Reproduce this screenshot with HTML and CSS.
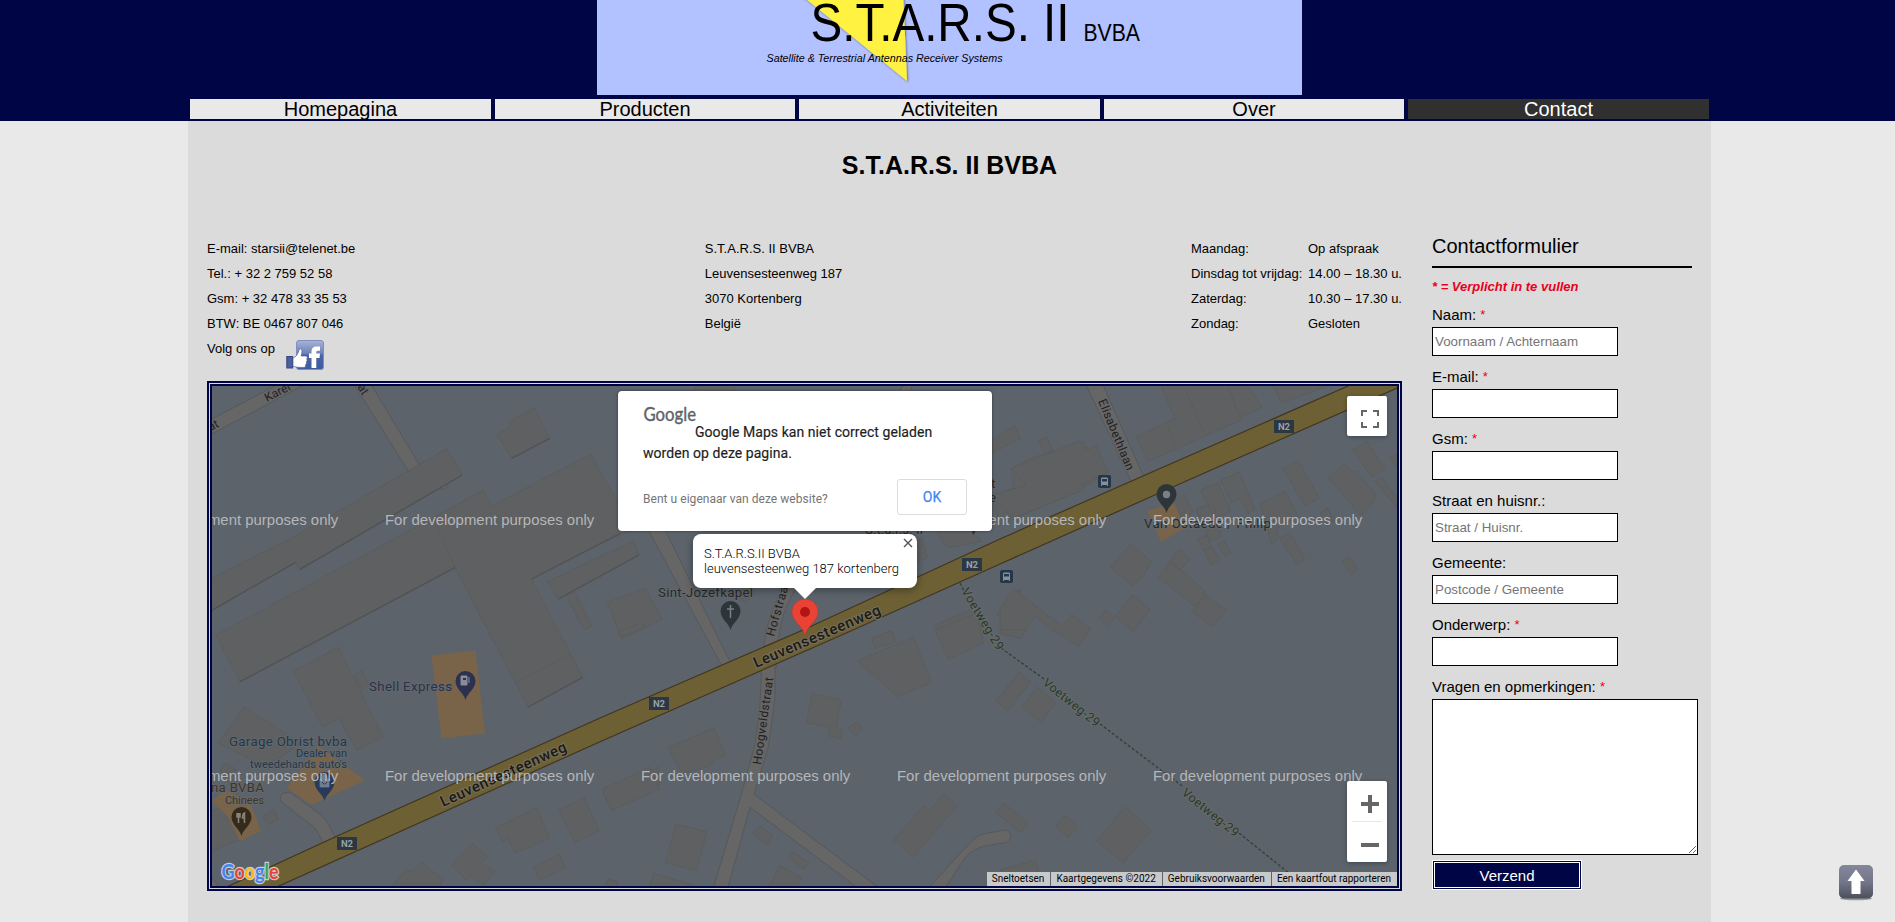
FILE: index.html
```html
<!DOCTYPE html>
<html lang="nl">
<head>
<meta charset="utf-8">
<title>S.T.A.R.S. II BVBA - Contact</title>
<link rel="stylesheet" href="styles.css">
</head>
<body>
<header class="header">
  <svg class="banner" width="705" height="95" viewBox="597 0 705 95">
    <defs><filter id="soft" x="-10%" y="-10%" width="130%" height="130%"><feDropShadow dx="1" dy="1" stdDeviation="1" flood-opacity=".45"/></filter></defs>
    <polygon points="795,-10 903,-10 907,81" fill="#fff23f" filter="url(#soft)"/>
    <text x="810.500" y="40.500" font-size="54" textLength="259" lengthAdjust="spacingAndGlyphs">S.T.A.R.S. II</text>
    <text x="1083.500" y="40.500" font-size="23.500" textLength="56.500" lengthAdjust="spacingAndGlyphs">BVBA</text>
    <text x="766.500" y="62" font-size="11" font-style="italic" textLength="236" lengthAdjust="spacingAndGlyphs">Satellite &amp; Terrestrial Antennas Receiver Systems</text>
  </svg>
  <nav class="nav">
    <a>Homepagina</a><a>Producten</a><a>Activiteiten</a><a>Over</a><a class="active">Contact</a>
  </nav>
</header>
<main class="page">
  <h1 class="title">S.T.A.R.S. II BVBA</h1>
  <div class="columns">
    <section class="left">
      <div class="info">
        <ul class="list contact">
          <li>E-mail: starsii@telenet.be</li><li>Tel.: + 32 2 759 52 58</li><li>Gsm: + 32 478 33 35 53</li><li>BTW: BE 0467 807 046</li>
          <li class="follow">Volg ons op
            <svg class="fb" width="38" height="30" viewBox="0 0 38 30">
              <defs><linearGradient id="fbg" x1="0" y1="0" x2="0" y2="1"><stop offset="0" stop-color="#a9b4d6"/><stop offset=".45" stop-color="#6c80b8"/><stop offset=".5" stop-color="#4a64a6"/><stop offset="1" stop-color="#3d5a9f"/></linearGradient></defs>
              <rect x="10.500" y=".5" width="27" height="29" rx="2.500" fill="url(#fbg)" stroke="#8090be"/>
              <path d="M25.500 28V18H23v-4.500h2.500V12c0-4 2-5.500 5-5.500h3.500v4.300h-2c-1.200 0-1.700.6-1.700 1.600v1.100H34l-.5 4.500h-3.200v10z" fill="#fff"/>
              <rect x=".8" y="16.500" width="5.800" height="11.500" fill="#4a5f9c" stroke="#33477f"/>
              <path d="M7 18c3-1 5-4 6-8 .4-1.800 3-1.500 3 1 0 2-.6 3.500-.8 5h4.500c2 0 2 2.500.8 3 1 .8.800 2.300-.3 2.800.8.900.4 2.300-.6 2.600.5 1.400-.2 3-1.800 3H13c-2.500 0-4-1-6-1z" fill="#fff" stroke="#4a5f9c" stroke-width=".7"/>
            </svg>
          </li>
        </ul>
        <ul class="list"><li>S.T.A.R.S. II BVBA</li><li>Leuvensesteenweg 187</li><li>3070 Kortenberg</li><li>België</li></ul>
        <dl class="hours"><dt>Maandag:</dt><dd>Op afspraak</dd><dt>Dinsdag tot vrijdag:</dt><dd>14.00 – 18.30 u.</dd><dt>Zaterdag:</dt><dd>10.30 – 17.30 u.</dd><dt>Zondag:</dt><dd>Gesloten</dd></dl>
      </div>
      <div class="map">
        <svg class="tiles" width="1185" height="500" viewBox="212 386 1185 500">
          <defs>
            <path id="pin" d="M0 19C-1.500 12-10 8-10 0A10 10 0 0 1 10 0C10 8 1.500 12 0 19z"/>
            <g id="n2"><rect width="20" height="13" fill="#2a3744"/><text x="10" y="10.300" text-anchor="middle" class="shield">N2</text></g>
            <g id="bus"><rect width="13" height="13" rx="2" fill="#26364a"/><rect x="3" y="2.500" width="7" height="7.500" rx="1.200" fill="#8a9098"/><rect x="4" y="4" width="5" height="2.500" fill="#26364a"/><path d="M3.500 9.500v1.500M9.500 9.500v1.500" stroke="#8a9098"/></g>
          </defs>
          <rect x="212" y="386" width="1185" height="500" fill="#5c636b"/>
          <g class="street" transform="translate(200 375) scale(.33333)">
            <path d="M30 135 240 25H320L30 180zM460 25H511L658 270 668 287 735 306 746 325 735 343 715 340 645 320 625 288z"/>
          </g>
          <g class="street" transform="translate(600 375) scale(.33333)">
            <path d="M940 25 925 60H890L915 25zM145 465H195L395 870 365 872zM495 790C505 730 530 670 560 620H600C550 700 535 740 528 880H485z"/>
          </g>
          <g class="street" transform="translate(1000 375) scale(.33333)"><path d="M258 28H308L430 303 395 322z"/></g>
          <g class="street" transform="translate(200 630) scale(.33333)"><path d="M405 622 384 580C370 560 350 545 275 490 250 480 235 500 243 515L340 590C355 605 362 625 370 640zM30 735 60 775H30z"/></g>
          <g class="street" transform="translate(600 630) scale(.33333)"><path d="M485 110 480 230 465 345 425 490 340 775H383L450 532 775 775H838L462 493 505 350 525 200V90zM985 775 1085 665C1115 635 1125 620 1150 612L1215 600C1238 602 1238 635 1215 638L1160 647C1130 652 1110 665 1090 690L1035 775z"/></g>
          <g class="build" transform="translate(200 375) scale(.33333)">
            <path d="M30 612 274 490 740 221 787 300 300 583 287 562 30 708z"/>
            <path d="M45 782 700 428 848 345 875 393 1172 238 1300 465 1200 505 995 612 1148 907 985 996 765 578 120 920 48 780z"/>
            <path d="M700 428 765 578M947 923 1110 837"/>
            <path d="M891 178 934 155 928 140 1003 98 1049 190 934 251zM1043 620 1300 497 1317 540 1075 672zM1098 660 1125 650 1176 752 1152 765zM1222 682 1335 640 1388 732 1265 792z"/>
          </g>
          <g class="shade" transform="translate(200 375) scale(.33333)"><path d="M787 300 300 583M287 562 36 706M765 578 120 920M934 251 1049 190M995 612 1260 476M1075 672 1317 540M985 996 1148 907"/></g>
          <g class="build" transform="translate(200 630) scale(.33333)">
            <path d="M280 122 415 52 550 320 470 361 418 265 368 291zM133 230 300 340 200 410 55 340zM80 398 150 450 100 480 60 420zM30 545 60 535 130 625 30 665zM188 558 222 538 235 568 203 584zM462 135 485 122 507 165 485 178z"/>
            <path d="M886 595 1010 533 1048 625 945 670 925 625 908 635zM1075 540 1152 502 1198 602 1125 636zM1206 482 1375 412 1380 465 1235 542zM1000 712 1080 673 1094 712 1020 751zM755 707 817 640 863 682 845 700 884 725 850 765 812 740 800 750zM570 775 620 718 635 725 665 697 730 750 715 775zM1218 760 1225 748 1252 755V775H1215z"/>
          </g>
          <g class="build" transform="translate(600 375) scale(.33333)">
            <path d="M280 50 290 30H400L408 50zM1175 195 1245 152 1262 190 1175 235zM1175 365 1240 340 1235 280 1290 250 1450 200 1500 270 1525 290 1440 345 1200 450zM1010 470 1120 468 1145 500 1042 518zM940 500 965 490 983 548 940 565zM400 655 460 635 440 685zM1000 752 1110 705 1155 770 1120 810zM1210 690 1260 640V740L1190 720z"/>
          </g>
          <g class="build" transform="translate(600 630) scale(.33333)">
            <path d="M55 5 120-20 140-10 65 20zM205 352 343 294 375 375 335 395 338 406 262 425 240 420zM5 478 150 412 178 477 35 542zM228 582 320 605 290 723 196 698zM160 730 282 765V775H148zM18 765 25 748 52 757V775H18zM637 190 725 210 708 290 728 300 722 326 685 317 690 292 619 278zM745 292 773 275 788 300 765 318zM815 25 875 2 888 35 825 56zM772 92 940 22 995 157 893 200zM1005 0 1130-50 1150 40 1045 88zM882 630 970 526 990 542 1032 490 1071 528 940 681zM457 610 480 586 518 618 500 644zM566 685 580 667 626 698 613 718zM540 706 606 745 585 775H505zM1188 548 1210 518 1284 580 1262 608zM1200 720 1305 690 1320 740 1200 730zM1187 213 1257 126 1292 155 1223 243z"/>
          </g>
          <g class="build" transform="translate(1000 375) scale(.33333)">
            <path d="M480 25H740L786 98 726 125 722 135 443 260 408 185 525 130zM555 40 612 175M685 35 720 130M502 155 527 213M818 30H990L845 84zM35 280 240 197 255 225 290 213 325 292 245 328 250 345 40 430-30 360 80 332zM116 198 140 186 158 228 137 238zM1058 225 1100 198 1155 282 1115 307zM850 282 895 255 957 370 915 392zM985 308 1035 267 1060 292 1068 287 1130 363 1110 395 1082 420zM1125 318 1145 308 1200 380V410zM1170 250 1200 230V290zM663 315 718 291 765 402 745 415 717 370 693 382zM602 345 655 323 692 408 645 430zM780 385 855 348 895 425 830 460 835 490 815 507zM587 402 640 385 662 485 630 500zM525 375 555 360 578 410 550 440zM332 577 392 507 455 560 428 605 398 633zM475 605 515 560 618 652 585 695zM507 560 537 522 571 552 540 585zM578 710 617 660 678 706 637 756zM345 725 397 658 450 705 400 770zM298 730 318 706 343 728 322 750zM592 492 622 482 635 518 610 526zM611 528 635 514 659 554 635 570zM652 508 672 496 692 535 675 545zM840 490 870 472 914 550 890 568zM1027 560 1048 545 1074 582 1053 599zM960 415 982 400 1003 438 980 452zM0 700 40 642 185 752 215 719 272 760 235 814 160 766 107 724 60 790 0 770z"/>
          </g>
          <g class="build" transform="translate(1000 630) scale(.33333)"><path d="M67 232 110 170 168 218 122 276zM167 588 195 556 233 592 205 622zM290 633 375 530 453 600 370 698zM0 10 60 25 80 0H0z"/></g>
          <g fill="#7a6449">
            <path d="M431.500 655.500 475.500 650.500 485 733.500 441.500 738.500zM287 788 318 746 365 780 312 805zM212 801 225 790 250 802 261 831 240 841 228 817zM1147.500 511 1174 503 1185 528 1161 542z"/>
          </g>
          <path d="M220 890 335 837 600 718 803 630 1000 539 1143 476 1348 386 1360 380H1415L1397 388 1175 486 1000 564 853 630 600 741.700 270 890z" fill="#6d6035" stroke="#42351f" stroke-width="1.200"/>
          <path d="M960 583 966 595M1001 648 1044 679M1100 724 1182 786M1239 833 1305 886" fill="none" stroke="#30413a" stroke-width="1.300" stroke-dasharray="3 2"/>
          <use href="#n2" x="337" y="837"/><use href="#n2" x="649" y="697"/><use href="#n2" x="962" y="558"/><use href="#n2" x="1274" y="420"/>
          <use href="#bus" x="1098" y="475"/><use href="#bus" x="1000" y="570"/>
          <g class="road main"><text transform="translate(443 807) rotate(-24.300)" textLength="137">Leuvensesteenweg</text><text transform="translate(756 668) rotate(-23.300)" textLength="137">Leuvensesteenweg</text></g>
          <g class="road">
            <text transform="translate(267 402) rotate(-27)">Karel</text><text transform="translate(201 436) rotate(-27)">raat</text>
            <text transform="translate(357 387) rotate(58)">at</text>
            <text transform="translate(1098 401) rotate(67.500)" textLength="76">Elisabethlaan</text>
            <text transform="translate(774 637) rotate(-74)" textLength="56">Hofstraat</text>
            <text transform="translate(761 765) rotate(-82)" textLength="88">Hoogveldstraat</text>
          </g>
          <g class="path">
            <text transform="translate(961 591) rotate(59)" textLength="70">Voetweg-29</text>
            <text transform="translate(1042 684) rotate(39)" textLength="69">Voetweg-29</text><text transform="translate(1181 794) rotate(39)" textLength="69">Voetweg-29</text>
          </g>
          <g class="poi">
            <text x="369" y="691" fill="#2c3048" textLength="83">Shell Express</text>
            <text x="229" y="746" fill="#243649" textLength="118">Garage Obrist bvba</text>
            <text x="296" y="757" class="sm" fill="#243649" textLength="51">Dealer van</text><text x="250" y="768" class="sm" fill="#243649" textLength="97">tweedehands auto's</text>
            <text x="211" y="792" fill="#3f342a" textLength="53">na BVBA</text><text x="225" y="804" class="sm" fill="#3f342a" textLength="39">Chinees</text>
            <text x="658" y="597" textLength="95">Sint-Jozefkapel</text><text x="865" y="534">S.t.a.r.s. II</text><text x="991" y="488">t</text><text x="989" y="502">e</text>
            <text x="1144" y="528" textLength="127">Van Ostaede / Philip</text>
          </g>
          <use href="#pin" x="465.500" y="681" fill="#2d3150"/><path d="M461 676h6v9h-6zM469 677v6" fill="#8a8c98" stroke="#8a8c98"/><path d="M463 678h3v2h-3z" fill="#2d3150"/>
          <use href="#pin" x="324.500" y="782" fill="#273a5c"/><path d="M320 779h9v8h-9zM322 779v-2a2.500 2.500 0 0 1 5 0v2" fill="#717c8f" stroke="#717c8f" stroke-width=".8"/><path d="M322 782q2.500 4 5 0" fill="none" stroke="#273a5c"/>
          <use href="#pin" x="241.500" y="817" fill="#352b1d"/><path d="M237 813v4h3v-4M238.500 813v10M244.500 823v-10q-2 1-2 5h2" fill="none" stroke="#8a8477" stroke-width="1.500"/>
          <use href="#pin" x="730.500" y="611" fill="#2e3538"/><path d="M730.500 605v13M727 609h7" stroke="#798186" stroke-width="1.500"/>
          <use href="#pin" x="1166.500" y="494" fill="#2e3538"/><circle cx="1166.500" cy="494.500" r="3.700" fill="#798186"/><path d="M971 530h5l-2.500 5z" fill="#2e3538"/>
          <g class="dev">
            <text x="129" y="524.500">For development purposes only</text><text x="385" y="524.500">For development purposes only</text><text x="897" y="524.500">For development purposes only</text><text x="1153" y="524.500">For development purposes only</text>
            <text x="129" y="780.500">For development purposes only</text><text x="385" y="780.500">For development purposes only</text><text x="641" y="780.500">For development purposes only</text><text x="897" y="780.500">For development purposes only</text><text x="1153" y="780.500">For development purposes only</text>
          </g>
          <g class="glogo"><text x="221.500" y="878.500" textLength="57" lengthAdjust="spacingAndGlyphs"><tspan fill="#4285f4">G</tspan><tspan fill="#ea4335">o</tspan><tspan fill="#fbbc05">o</tspan><tspan fill="#4285f4">g</tspan><tspan fill="#34a853">l</tspan><tspan fill="#ea4335">e</tspan></text></g>
          <path d="M805 636C804 626 792 622 792 612A13 13 0 0 1 818 612C818 622 806 626 805 636z" fill="#ea4335" stroke="#c5372b" stroke-width=".6"/><circle cx="805" cy="612" r="5" fill="#b31412"/>
        </svg>
        <div class="bubble"><div>S.T.A.R.S.II BVBA</div><div>leuvensesteenweg 187 kortenberg</div>
          <svg class="close" width="10" height="10" viewBox="0 0 10 10"><path d="M1 1l8 8M9 1l-8 8" stroke="#555" stroke-width="1.400"/></svg>
        </div>
        <div class="dialog">
          <svg class="dlogo" width="52" height="22" viewBox="0 0 52 22"><text x="-.5" y="17" textLength="52.500" lengthAdjust="spacingAndGlyphs">Google</text></svg>
          <p class="msg">Google Maps kan niet correct geladen worden op deze pagina.</p>
          <div class="dfoot"><span>Bent u eigenaar van deze website?</span><button class="ok">OK</button></div>
        </div>
        <div class="ctl full"><svg width="18" height="18" viewBox="0 0 18 18"><path d="M1 6V1h5M12 1h5v5M17 12v5h-5M6 17H1v-5" fill="none" stroke="#666" stroke-width="2"/></svg></div>
        <div class="ctl zoom"><svg width="40" height="81" viewBox="0 0 40 81"><path d="M14 23h18M23 14v18M14 64h18" stroke="#666" stroke-width="4"/><path d="M5 40.500h30" stroke="#e6e6e6"/></svg></div>
        <div class="attrib"><span>Sneltoetsen</span><span>Kaartgegevens ©2022</span><span>Gebruiksvoorwaarden</span><span>Een kaartfout rapporteren</span></div>
      </div>
    </section>
    <form class="form">
      <h2>Contactformulier</h2>
      <p class="req">* = Verplicht in te vullen</p>
      <label>Naam: <i>*</i></label><input placeholder="Voornaam / Achternaam">
      <label>E-mail: <i>*</i></label><input>
      <label>Gsm: <i>*</i></label><input>
      <label>Straat en huisnr.:</label><input placeholder="Straat / Huisnr.">
      <label>Gemeente:</label><input placeholder="Postcode / Gemeente">
      <label>Onderwerp: <i>*</i></label><input>
      <label>Vragen en opmerkingen: <i>*</i></label><textarea></textarea>
      <button class="send" type="button">Verzend</button>
    </form>
  </div>
</main>
<a class="top"><svg width="36" height="38" viewBox="0 0 36 38">
  <defs><linearGradient id="tg" x1="0" y1="0" x2="0" y2="1"><stop offset="0" stop-color="#84869a"/><stop offset=".5" stop-color="#74778a"/><stop offset="1" stop-color="#4c4f5c"/></linearGradient></defs>
  <ellipse cx="18" cy="34.500" rx="16" ry="1.800" fill="#999"/><rect x="1" y="1" width="34" height="33.500" rx="5" fill="url(#tg)"/><path d="M18 5.500l8.500 11.500H22.500v13h-9V17H9.500z" fill="#fff"/></svg></a>
</body>
</html>
```
FILE: styles.css
```css
* { box-sizing: border-box; }
body { margin: 0; height: 922px; overflow: hidden; background: #e9e9e9; color: #000; font-family: "Liberation Sans", Arial, sans-serif; }
h1, h2, p, ul, dl, dd { margin: 0; padding: 0; }
.header { height: 121px; background: #000545; display: flex; flex-direction: column; align-items: center; gap: 4px; padding-left: 4px; }
.banner { display: block; background: #b2c1ff; flex: none; }
.nav { width: 1519px; height: 20px; display: grid; grid-template-columns: repeat(5, 1fr); gap: 3.6px; }
.nav a { background: #e9e9e9; text-align: center; font-size: 20px; line-height: 20px; }
.nav a.active { background: #303030; color: #fff; }
.page { width: 1523px; height: 801px; margin-left: 188px; background: #dbdbdb; padding: 29px 0 0 19px; }
.title { font-size: 25px; line-height: 30px; text-align: center; padding-right: 19px; }
.columns { display: flex; padding-top: 56px; }
.left { width: 1195px; }
.info { display: flex; justify-content: space-between; height: 145px; font-size: 13px; line-height: 25px; }
.list { list-style: none; }
.contact { width: 160px; }
.follow { display: flex; gap: 11px; }
.fb { margin-top: 4px; flex: none; }
.hours { display: grid; grid-template-columns: 117px auto; grid-auto-rows: 25px; }
.hours dd { white-space: nowrap; }
.info .list:nth-child(2) { margin-left: 164px; margin-right: 175px; }
.map { position: relative; width: 1195px; height: 510px; border: 5px double #000545; overflow: hidden; font-family: Roboto, sans-serif; }
.tiles { display: block; }
.street { fill: #666; stroke: #545659; stroke-width: 2.5; }
.build { fill: #5f6061; stroke: #595a5b; stroke-width: 2; }
.shade { fill: none; stroke: #515254; stroke-width: 4; }
.shield { font: 700 9.5px Roboto, sans-serif; fill: #9a9fa5; }
.road { font-size: 12px; font-weight: 400; fill: #1f2123; paint-order: stroke; stroke: #666; stroke-width: 2px; }
.road.main { font-size: 15px; font-weight: 500; fill: #1c1a16; stroke: #77705c; stroke-width: 2px; }
.path { font-size: 12.5px; fill: #26382e; paint-order: stroke; stroke: #676b68; stroke-width: 2px; }
.poi { font-size: 13.3px; fill: #26292b; paint-order: stroke; stroke: #646a6e; stroke-width: 1.5px; }
.poi .sm { font-size: 11px; }
.dev { font: 14.95px "Liberation Sans", Arial, sans-serif; fill: #b5b6b8; }
.glogo { font: 700 20px Lato, sans-serif; paint-order: stroke; stroke: #c9ccd0; stroke-width: 2.5px; }
.dialog { position: absolute; left: 406px; top: 5px; width: 374px; height: 140px; background: #fff; border-radius: 4px; box-shadow: 0 0 3px rgba(0,0,0,.5); padding: 14px 25px; }
.dlogo { position: absolute; left: 26px; top: 13px; font: 19px Lato, sans-serif; fill: #5f6368; stroke: #5f6368; stroke-width: .4px; overflow: visible; }
.msg { font-size: 14px; line-height: 21px; letter-spacing: .05px; color: #212121; text-indent: 52px; padding-top: 17px; -webkit-text-stroke: .15px #212121; }
.dfoot { display: flex; justify-content: space-between; align-items: center; padding-top: 15px; font-size: 12px; letter-spacing: .04px; color: #757575; }
.dfoot span { padding-top: 3px; }
.ok { width: 70px; height: 36px; border: 1px solid #dadce0; border-radius: 3px; background: #fff; color: #4285f4; font: 14px Roboto, sans-serif; -webkit-text-stroke: .25px #4285f4; }
.bubble { position: absolute; left: 481px; top: 148px; width: 224px; height: 54px; padding: 12px 11px; background: #fff; border-radius: 8px; font-size: 13px; font-weight: 300; line-height: 15px; white-space: nowrap; box-shadow: 0 2px 7px 1px rgba(0,0,0,.3); }
.bubble::after { content: ""; position: absolute; left: 100px; top: 53px; border: 12px solid transparent; border-top-color: #fff; border-bottom: 0; }
.close { position: absolute; right: 4px; top: 4px; }
.ctl { position: absolute; right: 10px; width: 40px; background: #fff; border-radius: 2px; box-shadow: 0 1px 4px rgba(0,0,0,.3); }
.full { top: 10px; height: 40px; padding: 14px 0 0 14px; }
.zoom { top: 395px; height: 81px; }
.ctl svg { display: block; }
.attrib { position: absolute; right: 0; bottom: 0; height: 14px; display: flex; gap: 1px; font-size: 10px; line-height: 14px; color: #000; white-space: nowrap; }
.attrib span { background: #c8c9ca; padding: 0 6px 0 5px; }
.form { width: 266px; margin-left: 30px; display: flex; flex-direction: column; align-items: flex-start; }
.form h2 { width: 260px; height: 32px; font-size: 20px; font-weight: 400; line-height: 20px; border-bottom: 2px solid #000; }
.req { font-size: 13px; font-weight: 700; font-style: italic; color: #e8001c; line-height: 15px; padding-top: 11px; }
.form label { font-size: 15px; line-height: 17px; padding-top: 12px; height: 33px; }
.form label i { color: #e8001c; font-style: normal; font-size: 13px; vertical-align: 1px; }
.form input { width: 186px; height: 29px; border: 1px solid #000; padding: 1px 2px; font: 13.333px "Liberation Sans", Arial, sans-serif; background: #fff; }
.form textarea { width: 266px; height: 156px; border: 1px solid #000; background: #fff; resize: both; }
.send { margin-top: 5px; width: 150px; height: 30px; border: 3px double #fff; background: #000545; color: #fff; font: 15px "Liberation Sans", Arial, sans-serif; padding: 0; }
.top { position: fixed; left: 1838px; top: 864px; }
```
